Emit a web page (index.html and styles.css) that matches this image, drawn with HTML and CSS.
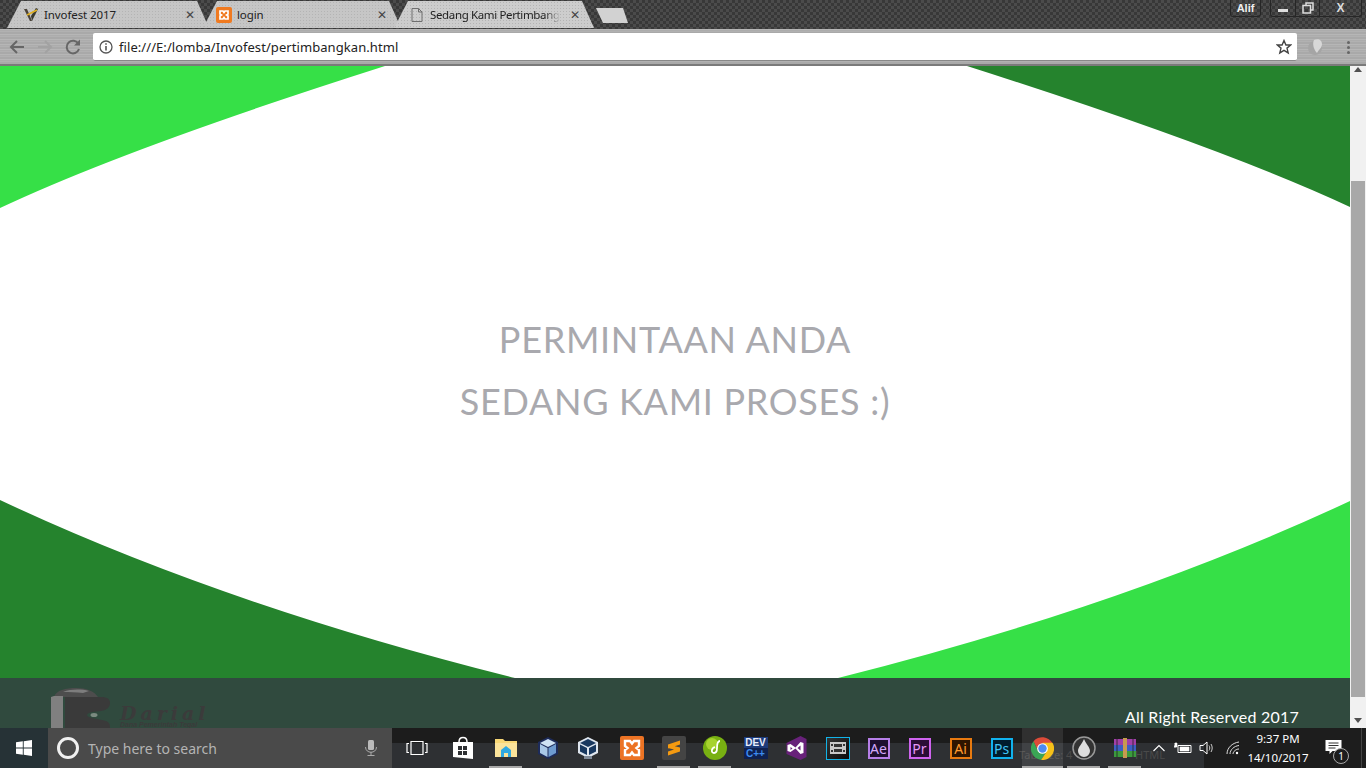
FILE: index.html
```html
<!DOCTYPE html>
<html lang="id">
<head>
<meta charset="utf-8">
<title>Sedang Kami Pertimbangkan</title>
<link rel="stylesheet" href="styles.css">
</head>
<body>
<div class="tabstrip">
  <div class="tab tab-a">
    <svg class="fav" viewBox="0 0 16 16"><path d="M1 2 7 14 9 14 7 9 4 2Z" fill="#4a4238"/><path d="M8 9 13 1 15 2 9 14Z" fill="#3a3a30"/><path d="M4 8 14 3" stroke="#e0b020" stroke-width="1.6"/></svg>
    <span class="tab-title">Invofest 2017</span>
    <span class="tab-x">✕</span>
  </div>
  <div class="tab tab-b">
    <svg class="fav" viewBox="0 0 16 16"><rect width="16" height="16" rx="2" fill="#f07a20"/><path d="M4 4h3l1 1.500 1-1.500h3v3l-1.500 1 1.500 1v3H9L8 10.500 7 12H4V9l1.500-1L4 7Z" fill="none" stroke="#fff" stroke-width="1.700"/></svg>
    <span class="tab-title">login</span>
    <span class="tab-x">✕</span>
  </div>
  <div class="tab tab-c">
    <svg class="fav" viewBox="0 0 16 16"><path d="M3 1.500h6.500L13 5v9.500H3ZM9.500 1.500V5H13" fill="none" stroke="#6e6e6e"/></svg>
    <span class="tab-title fade">Sedang Kami Pertimbang</span>
    <span class="tab-x">✕</span>
  </div>
  <div class="newtab"></div>
  <div class="winbar">
    <div class="profile">Alif</div>
    <div class="winbtns">
      <span class="winbtn"><i class="min"></i></span>
      <span class="winbtn sep"><svg viewBox="0 0 12 12" width="12" height="12"><path d="M4 3V1h7v7H8.500M1 3.500h7.500V11H1Z" fill="none" stroke="#ddd" stroke-width="1.500"/></svg></span>
      <span class="winbtn sep wide close">X</span>
    </div>
  </div>
</div>

<div class="toolbar">
  <svg class="navicon" viewBox="0 0 18 18"><path d="M16 9H3M9 3 3 9l6 6" fill="none" stroke="#666" stroke-width="2"/></svg>
  <svg class="navicon dim" viewBox="0 0 18 18"><path d="M2 9h13M9 3l6 6-6 6" fill="none" stroke="#a2a2a2" stroke-width="2"/></svg>
  <svg class="navicon" viewBox="0 0 18 18"><path d="M14.500 6A6.300 6.300 0 1 0 15 11" fill="none" stroke="#666" stroke-width="2"/><path d="M16 1.500v6h-6Z" fill="#666"/></svg>
  <div class="omnibox">
    <svg class="info" viewBox="0 0 14 14"><circle cx="7" cy="7" r="6" fill="none" stroke="#555" stroke-width="1.300"/><path d="M7 6v4.500M7 3.300v1.500" stroke="#555" stroke-width="1.600"/></svg>
    <span class="url">file:///E:/lomba/Invofest/pertimbangkan.html</span>
    <svg class="star" viewBox="0 0 16 16"><path d="M8 1.500 9.900 6h4.800l-3.700 3.100 1.200 4.800L8 11.300 3.800 13.900 5 9.100 1.300 6h4.800Z" fill="none" stroke="#444" stroke-width="1.400"/></svg>
  </div>
  <svg class="ext" viewBox="0 0 18 18"><circle cx="8" cy="10" r="7" fill="#a5a5a5"/><path d="M7 2c4-2 8 0 8 4 0 4-3 5-5 9-3-3-5-9-3-13Z" fill="#d8d8d8"/></svg>
  <div class="kebab"><i></i><i></i><i></i></div>
</div>

<div class="viewport">
  <main class="page">
    <section class="hero">
      <svg class="curves" viewBox="0 0 1350 612" preserveAspectRatio="none">
        <path d="M0 0H385Q127 82 0 142Z" fill="#36e047"/>
        <path d="M1350 0H967Q1224 82 1350 141Z" fill="#25832d"/>
        <path d="M0 434Q223 539 515 612H0Z" fill="#25832d"/>
        <path d="M1350 435Q1128 539 838 612H1350Z" fill="#36e047"/>
      </svg>
      <h1 class="message">PERMINTAAN ANDA<br>SEDANG KAMI PROSES :)</h1>
    </section>
    <footer class="footer">
      <div class="brand">
        <svg class="brand-mark" viewBox="0 0 60 50" width="60" height="50"><path d="M3 9C5 2 15 0 25 0c10 0 18 3 22 9Z" fill="#4d4d4d"/><path d="M12 4c8-3 18-3 26-1l-6 2C25 4 18 4 12 4Z" fill="#7d7d7d"/><path d="M0 9 3 8h9v42H0Z" fill="#808080"/><path d="M14 9h36c6 0 9 2 9 6s-3 7-9 8l-9 1c-4 1-5 2-5 3s1 2 5 3l10 2c6 1 8 3 8 7v11H14Z" fill="#3a3a3a"/><ellipse cx="43" cy="27" rx="3.500" ry="2" fill="#7b8a80"/></svg>
        <div class="brand-text">
          <span class="brand-name">Darial</span>
          <span class="brand-sub">Dana Pemerintah Tegal</span>
        </div>
      </div>
      <p class="rights">All Right Reserved 2017</p>
    </footer>
  </main>
  <aside class="scrollbar">
    <span class="arrow up"></span>
    <span class="track"><span class="thumb"></span></span>
    <span class="arrow down"></span>
  </aside>
</div>

<div class="taskbar">
  <div class="start"><svg viewBox="0 0 16 16" width="16" height="16"><path d="M0 2.300 6.800 1.300V7.600H0ZM7.700 1.200 16 0V7.600H7.700ZM0 8.400H6.800V14.700L0 13.700ZM7.700 8.400H16V16L7.700 14.800Z" fill="#fff"/></svg></div>
  <div class="search">
    <span class="cortana"></span>
    <span class="search-text">Type here to search</span>
    <svg class="mic" viewBox="0 0 14 18" width="14" height="18"><rect x="4" y="1" width="6" height="10" rx="1.500" fill="#bbb"/><path d="M1.500 8c0 7 11 7 11 0M7 13v3M3.500 16.500h7" fill="none" stroke="#aaa"/></svg>
  </div>
  <div class="apps">
    <span class="ghost ghost-a">Tab Size: 4</span>
    <span class="ghost ghost-b">HTML</span>
    <span class="app taskview"><svg viewBox="0 0 22 16" width="22" height="16"><path d="M5 1.500h12v13H5ZM3 3.500H1v9h2M19 3.500h2v9h-2" fill="none" stroke="#fff" stroke-width="1.200"/></svg></span>
    <span class="app"><svg viewBox="0 0 22 24" width="22" height="24"><path d="M7 6c0-6 8-6 8 0" fill="none" stroke="#fff" stroke-width="1.500"/><path d="M1 6h20v17L1 21Z" fill="#fff"/><path d="M6 10h4v4H6ZM11 10h4v4h-4ZM6 15h4v4H6ZM11 15h4v4h-4Z" fill="#2e3033"/></svg></span>
    <span class="app files running"><svg viewBox="0 0 22 20" width="22" height="20"><path d="M0 1h8l2 2h12v16H0Z" fill="#f8d775"/><path d="M0 5h22v14H0Z" fill="#fbe39a"/><path d="M6 12 11 8l5 4v7h-3v-4H9v4H6Z" fill="#2fa8e0"/></svg></span>
    <span class="app cube"><svg viewBox="0 0 22 24" width="22" height="24"><path d="M11 1 21 6v12l-10 5L1 18V6Z" fill="#1d2b5a"/><path d="M11 3 19 7l-8 4-8-4Z" fill="#cfe3f5"/><path d="M3 8l7.500 4v9L3 17Z" fill="#a9c8e8"/><path d="M19 8l-7.500 4v9L19 17Z" fill="#6e9bd0"/></svg></span>
    <span class="app vbox"><svg viewBox="0 0 22 24" width="22" height="24"><path d="M11 1 21 6v11l-10 5L1 17V6Z" fill="#dfe6ef"/><path d="M11 3 19 7l-8 4-8-4Z" fill="#17375f"/><path d="M3 8.500l7 3.500v7l-7-3.500Z" fill="#17375f"/><path d="M19 8.500 12 12v7l7-3.500Z" fill="#17375f"/><rect x="7" y="20" width="8" height="3" fill="#7f8a99"/></svg></span>
    <span class="app xampp"><svg viewBox="0 0 24 24" width="24" height="24"><rect width="24" height="24" rx="2" fill="#ec7324"/><path d="M5 5h5l2 2.500L14 5h5v5l-2.500 2L19 14v5h-5l-2-2.500L10 19H5v-5l2.500-2L5 10Z" fill="none" stroke="#fff" stroke-width="2.400"/></svg></span>
    <span class="app sublime running"><svg viewBox="0 0 24 24" width="24" height="24"><rect width="24" height="24" rx="2" fill="#444"/><path d="M18 4.500v4L6 12.500v-4ZM18 11.500v4l-12 4v-4l6-2-6-1.500V8.500Z" fill="#f59a10"/></svg></span>
    <span class="app running"><svg viewBox="0 0 24 24" width="24" height="24"><circle cx="12" cy="12" r="12" fill="#78b012"/><circle cx="9" cy="8" r="6" fill="#a6d32e"/><path d="M17 5c-2 0-3 3-3 7 0 4-1 5-3 5-3 0-3-5 1-6" fill="none" stroke="#fff" stroke-width="1.800"/></svg></span>
    <span class="app dev"><b>DEV</b><b class="cpp">C++</b></span>
    <span class="app"><svg viewBox="0 0 20 24" width="21" height="24"><path d="M14 0 20 3V21L14 24 0 18V7Z" fill="#68217a"/><path d="M1 9l3-1 5 3.500L14 6l3 1v10l-3 1-5-5.500L4 16l-3-1Zm3 2v3l2-1.500ZM11 12l3 2.500v-5Z" fill="#fff" fill-rule="evenodd"/></svg></span>
    <span class="app"><span class="filmbox"><svg viewBox="0 0 16 12" width="16" height="12"><path d="M0 0h16v12H0Z" fill="#c8c8c8"/><path d="M4 2h8v3H4ZM4 7h8v3H4ZM1 2h2v2H1ZM13 2h2v2h-2ZM1 8h2v2H1ZM13 8h2v2h-2Z" fill="#333"/></svg></span></span>
    <span class="app"><span class="adobe ae">Ae</span></span>
    <span class="app"><span class="adobe pr">Pr</span></span>
    <span class="app"><span class="adobe ai">Ai</span></span>
    <span class="app"><span class="adobe ps">Ps</span></span>
    <span class="app active running"><svg viewBox="0 0 24 24" width="23" height="23"><path d="M12 6.600H22.400A12 12 0 0 0 2.600 4.500L7.300 14.700Z" fill="#dd4b39"/><path d="M7.300 14.700 2.600 4.500A12 12 0 0 0 10.500 23.900L16.700 14.700Z" fill="#3aa655"/><path d="M16.700 14.700 10.500 23.900A12 12 0 0 0 22.400 6H12Z" fill="#f6c019"/><circle cx="12" cy="12" r="5.600" fill="#fff"/><circle cx="12" cy="12" r="4.400" fill="#4c8bf0"/></svg></span>
    <span class="app running"><svg viewBox="0 0 24 24" width="24" height="24"><circle cx="12" cy="12" r="11" fill="#333" stroke="#999" stroke-width="1.500"/><path d="M12 3c2 5 6 8 6 12a6 6 0 0 1-12 0c0-4 4-7 6-12Z" fill="#ddd"/></svg></span>
    <span class="app running"><svg viewBox="0 0 24 20" width="24" height="20"><path d="M1 1h22v6H1Z" fill="#a23fa8"/><path d="M1 7h22v6H1Z" fill="#3d5fc4"/><path d="M1 13h22v6H1Z" fill="#3b9a3d"/><path d="M10 0h4v20h-4Z" fill="#c89a50"/><path d="M4 1v18M20 1v18" stroke="#222" stroke-width=".8"/></svg></span>
  </div>
  <div class="tray">
    <svg class="chev" viewBox="0 0 12 8" width="12" height="8"><path d="M.5 7 6 1.500 11.500 7" fill="none" stroke="#fff" stroke-width="1.100"/></svg>
    <svg class="batt" viewBox="0 0 18 12" width="18" height="12"><path d="M4 3.500h13v7H4Z" fill="none" stroke="#fff"/><path d="M6 5h9v4H6ZM0 5h3V1H1v1M1 1v5" fill="#fff" stroke="#fff" stroke-width=".6"/></svg>
    <svg class="vol" viewBox="0 0 16 14" width="16" height="14"><path d="M1 4.500h3L8 1v12L4 9.500H1Z" fill="none" stroke="#fff"/><path d="M10 4.500c1 1.500 1 3.500 0 5M12 3c1.600 2.500 1.600 5.500 0 8" fill="none" stroke="#ccc"/></svg>
    <svg class="wifi" viewBox="0 0 14 14" width="14" height="14"><path d="M1 13C1 7 6 2 13 1M4 13c0-4 4-8 9-8.500M7 13c0-2.500 3-5 6-5" fill="none" stroke="#ddd" stroke-width="1"/><circle cx="11" cy="12" r="1.200" fill="#fff"/></svg>
    <div class="clock"><span>9:37 PM</span><span>14/10/2017</span></div>
    <div class="notify"><svg viewBox="0 0 16 15" width="17" height="15"><path d="M0 0h16v11H7l-3 3v-3H0Z" fill="#fff"/><path d="M3 3h10M3 5.500h10M3 8h7" stroke="#333"/></svg><span class="badge">1</span></div>
    <span class="desk"></span>
  </div>
</div>
</body>
</html>
```

FILE: styles.css
```css
* { box-sizing: border-box; }
html, body { margin: 0; height: 768px; overflow: hidden; }
body { display: flex; flex-direction: column; width: 1366px; font-family: "Noto Sans", "Liberation Sans", sans-serif; background: #fff; }

.tabstrip {
  height: 29px; flex: none; display: flex; padding: 1px 0 1px 7px; position: relative;
  background-color: #414141;
  background-image: conic-gradient(#4b4b4b 25%, #383838 0 50%, #4b4b4b 0 75%, #383838 0);
  background-size: 6px 6px;
}
.tab {
  height: 27px; display: flex; align-items: center;
  clip-path: polygon(0 100%, 14px 0, calc(100% - 12px) 0, 100% 100%);
  background-color: #c6c6c6;
  background-image: radial-gradient(#b4b4b4 .6px, transparent .8px);
  background-size: 3px 3px;
  font-size: 11.500px; letter-spacing: -.1px; color: #222;
}
.tab-a { width: 202px; padding-left: 16px; }
.tab-b { width: 198px; margin-left: -6px; padding-left: 13px; }
.tab-c { width: 200px; margin-left: -7px; padding-left: 15px; background-color: #cdcdcd; }
.fav { width: 16px; height: 16px; flex: none; margin-right: 5px; }
.tab-title { white-space: nowrap; }
.fade { letter-spacing: -.36px; -webkit-mask-image: linear-gradient(to right, #000 88%, transparent); mask-image: linear-gradient(to right, #000 88%, transparent); }
.tab-x { margin-left: auto; margin-right: 14px; font-size: 12px; color: #444; font-family: "DejaVu Sans", sans-serif; font-weight: 700; }
.newtab { width: 32px; height: 15px; margin: 7px 0 0 2px; background: #d2d2d2; clip-path: polygon(0 0, 27px 0, 100% 100%, 7px 100%); }
.winbar { margin-left: auto; display: flex; align-items: flex-start; margin-top: -1px; padding-right: 4px; }
.profile { width: 31px; height: 17px; border: 1px solid #262626; border-top: 0; border-radius: 0 0 3px 3px; font: 700 11px/16px "Liberation Sans", sans-serif; color: #eee; text-align: center; margin-right: 9px; }
.winbtns { display: flex; height: 17px; border: 1px solid #262626; border-top: 0; border-radius: 0 0 3px 3px; }
.winbtn { width: 24px; display: flex; align-items: center; justify-content: center; color: #ddd; }
.winbtn.sep { border-left: 1px solid #262626; }
.winbtn.wide { width: 42px; font: 700 12px "Liberation Sans", sans-serif; }
.min { width: 10px; height: 3px; margin-top: 4px; background: #ddd; }

.toolbar {
  height: 37px; flex: none; display: flex; align-items: center; padding: 1px 0 0 8px; position: relative;
  background-color: #b0b0b0;
  background-image: repeating-linear-gradient(to bottom, #b6b6b6 0 1px, #acacac 1px 2px, #b1b1b1 2px 3px, #a9a9a9 3px 5px);
  border-bottom: 2px solid #7a7a7a;
}
.navicon { width: 18px; height: 18px; flex: none; margin-right: 10px; }
.omnibox { width: 1204px; height: 28px; margin-left: 1px; display: flex; align-items: center; background: #fff; border-radius: 2px; border: 1px solid #888; border-width: 0 0 1px 0; padding: 0 5px 0 6px; }
.info { width: 14px; height: 14px; flex: none; margin-right: 6px; }
.url { font-size: 13px; letter-spacing: .07px; color: #222; white-space: nowrap; }
.star { width: 16px; height: 16px; margin-left: auto; flex: none; }
.ext { width: 18px; height: 18px; margin-left: 10px; flex: none; }
.kebab { margin-left: 22px; display: flex; flex-direction: column; gap: 2px; }
.kebab i { width: 3px; height: 3px; border-radius: 50%; background: #666; }

.viewport { flex: 1; display: flex; min-height: 0; }
.page { width: 1350px; display: flex; flex-direction: column; }
.hero { height: 612px; position: relative; display: flex; align-items: center; justify-content: center; background: #fff; padding-bottom: 4px; }
.curves { position: absolute; inset: 0; width: 100%; height: 100%; }
.message { position: relative; margin: 0; font: 400 36px/62px "Lato", sans-serif; letter-spacing: .7px; color: #a9a9ae; text-align: center; }
.footer { flex: 1; background: #304a3e; display: flex; justify-content: space-between; padding: 10px 51px 0 51px; overflow: hidden; }
.brand { display: flex; align-items: flex-start; }
.brand-mark { flex: none; }
.brand-text { margin: 17px 0 0 9px; display: flex; flex-direction: column; color: #3b3b3b; }
.brand-name { font: italic 700 19px/16px "DejaVu Serif", serif; letter-spacing: 4px; }
.brand-sub { font: italic 700 7px/7px "Liberation Sans", sans-serif; }
.rights { margin: 18px 0 0; color: #fff; font: 400 16px/22px "Lato", sans-serif; letter-spacing: .22px; }

.scrollbar { width: 16px; background: #f1f1f1; display: flex; flex-direction: column; }
.arrow { height: 16px; flex: none; position: relative; }
.arrow::after { content: ""; position: absolute; left: 4px; width: 0; height: 0; border: 4px solid transparent; }
.arrow.up::after { top: 1px; border-bottom: 5px solid #505050; border-top: 0; }
.arrow.down::after { top: 6px; border-top: 5px solid #505050; border-bottom: 0; }
.track { flex: 1; padding-top: 99px; padding-bottom: 15px; display: flex; justify-content: center; }
.thumb { width: 14px; background: #a8a8a8; }

.taskbar { height: 40px; flex: none; display: flex; background: #1d1d1d; position: relative; }
.start { width: 48px; background: #263236; display: flex; align-items: center; justify-content: center; }
.search { width: 344px; background: #4a4a4a; display: flex; align-items: center; padding-left: 9px; }
.cortana { width: 22px; height: 22px; border-radius: 50%; border: 3px solid #f0f0f0; flex: none; }
.search-text { margin-left: 9px; font-size: 14px; color: #b4b4b4; }
.mic { margin-left: auto; margin-right: 14px; }
.apps { display: flex; padding-left: 4px; width: 758px; flex: none; position: relative; background: linear-gradient(to bottom, #1c1c1c 0 15px, #2e3033 15px); }
.app { width: 41px; height: 40px; flex: none; display: flex; align-items: center; justify-content: center; position: relative; }
.app.active { background: rgba(255,255,255,.09); }
.taskview { margin-right: 5px; }
.files { margin-left: 2px; }
.cube { margin-left: 1px; }
.vbox { margin-left: -1px; }
.xampp { margin-left: 3px; }
.sublime { margin-left: 1px; }
.running::after { content: ""; position: absolute; left: 4px; right: 4px; bottom: 0; height: 2px; background: #a8a8a8; }
.active.running::after { left: 0; right: 0; }
.ghost { position: absolute; top: 19px; font-size: 11px; line-height: 16px; color: #4a4a4a; white-space: nowrap; }
.ghost-a { left: 627px; }
.ghost-b { left: 743px; }
.dev { flex-direction: column; font: 700 10px/11px "Liberation Sans", sans-serif; }
.dev b { width: 24px; text-align: center; background: #1d3b7a; color: #e8eefc; }
.dev .cpp { background: #0f2150; color: #3d8cf0; }
.filmbox { width: 24px; height: 23px; border: 1px solid #12b3e8; background: linear-gradient(135deg, #333, #0b0b0b); display: flex; align-items: center; justify-content: center; }
.adobe { width: 22px; height: 21px; border: 2px solid; display: block; font: 400 14px/17px "Noto Sans", sans-serif; text-align: center; }
.ae { border-color: #b77fe8; color: #d3a8fa; background: #1e0f30; }
.pr { border-color: #cf63ee; color: #e49af8; background: #2a0d36; }
.ai { border-color: #e87a10; color: #ff9a2e; background: #2e1500; }
.ps { border-color: #11b2ee; color: #40c4f8; background: #001d2e; }
.tray { flex: 1; display: flex; align-items: center; color: #fff; padding-left: 3px; background: linear-gradient(#2e3033, #2e3033) left bottom / 54px 25px no-repeat; }
.batt { margin-left: 9px; }
.vol { margin-left: 7px; }
.wifi { margin-left: 11px; }
.clock { width: 58px; margin-left: 9px; display: flex; flex-direction: column; align-items: center; font-size: 11.500px; line-height: 19px; white-space: nowrap; }
.notify { position: relative; margin-left: 18px; width: 24px; height: 24px; padding-top: 4px; }
.notify svg { display: block; }
.badge { position: absolute; left: 8px; top: 12px; width: 16px; height: 16px; border: 1px solid #aaa; border-radius: 50%; background: #1d1d1d; font-size: 10px; line-height: 14px; text-align: center; }
.desk { margin-left: auto; margin-right: 4px; width: 1px; height: 100%; background: #444; }
```
